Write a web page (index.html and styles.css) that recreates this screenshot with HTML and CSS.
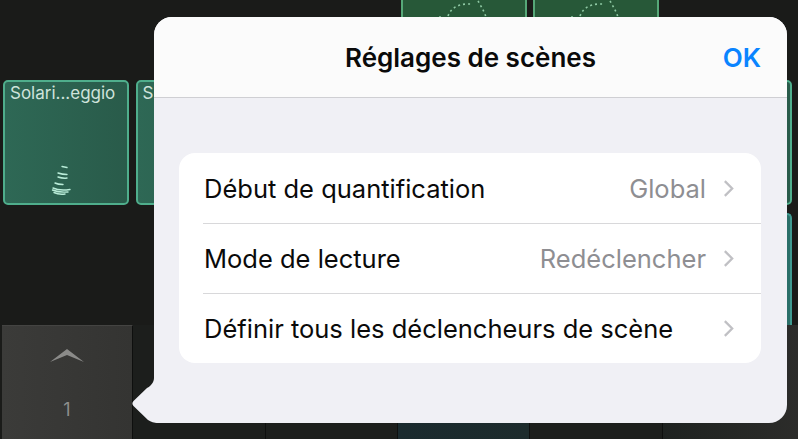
FILE: index.html
```html
<!DOCTYPE html>
<html lang="fr">
<head>
  <meta charset="UTF-8" />
  <title>Réglages de scènes</title>
  <link rel="stylesheet" href="styles.css">
</head>
<body>
  <div class="stage">
    <div class="clips">
      <div class="slot"></div>
      <div class="slot"></div>
      <div class="slot"></div>
      <div class="clip clip-dark">
        <svg class="arc" viewBox="0 0 126 72"><path d="M37 69 L40 69 M46 68 C49 60 56 56 66 56 L71 56 M76 53 C79 58 82 63 84 69"/></svg>
      </div>
      <div class="clip clip-dark">
        <svg class="arc" viewBox="0 0 126 72"><path d="M37 69 L40 69 M46 68 C49 60 56 56 66 56 L71 56 M76 53 C79 58 82 63 84 69"/></svg>
      </div>
      <div class="slot"></div>

      <div class="clip">
        <div class="clip-name">Solari...eggio</div>
        <svg class="wave" viewBox="0 0 30 36">
          <path d="M13 1.500 L18 2.500"/>
          <path d="M9 8 C12 9 15 9.500 18 9.500"/>
          <path d="M9 12 C12 13 15 13.500 18 13"/>
          <path d="M6 18 C8 19 11 19.500 14 19.500"/>
          <path d="M4 23 C8 25 14 25.500 21 24.500"/>
          <path d="M3.500 25 C8 27 13 27.500 19 27"/>
          <path d="M5 27.500 C8 29 12 29.500 16 29"/>
        </svg>
      </div>
      <div class="clip"><div class="clip-name">S</div></div>
      <div class="slot"></div>
      <div class="slot"></div>
      <div class="slot"></div>
      <div class="clip"></div>

      <div class="slot"></div>
      <div class="slot"></div>
      <div class="slot"></div>
      <div class="slot"></div>
      <div class="slot"></div>
      <div class="clip clip-teal"></div>
    </div>

    <div class="scenes">
      <div class="scene scene-on">
        <svg class="scene-up" viewBox="0 0 34 14"><path d="M0 14 L17 1 L34 14 L17 7 Z"/></svg>
        <span class="scene-num">1</span>
      </div>
      <div class="scene"></div>
      <div class="scene"></div>
      <div class="scene scene-teal"></div>
      <div class="scene"></div>
      <div class="scene scene-end"></div>
    </div>

    <div class="popover">
      <svg class="popover-tail" viewBox="0 0 30 50"><path d="M30 0 L24 0 L24 3 C24 7 21 11 17 13 L3.500 26 C2 27.500 2 29.500 3.500 31 L18 45 C21 47 24 48 28 48 L30 48 Z"/></svg>
      <div class="popover-head">
        <h1>Réglages de scènes</h1>
        <span class="ok-btn">OK</span>
      </div>
      <div class="settings">
        <div class="row">
          <span class="row-label">Début de quantification</span>
          <span class="row-value">Global</span>
          <svg class="chevron" viewBox="0 0 12 20"><path d="M2 2 L10 10 L2 18"/></svg>
        </div>
        <div class="row">
          <span class="row-label">Mode de lecture</span>
          <span class="row-value">Redéclencher</span>
          <svg class="chevron" viewBox="0 0 12 20"><path d="M2 2 L10 10 L2 18"/></svg>
        </div>
        <div class="row">
          <span class="row-label">Définir tous les déclencheurs de scène</span>
          <svg class="chevron" viewBox="0 0 12 20"><path d="M2 2 L10 10 L2 18"/></svg>
        </div>
      </div>
    </div>
  </div>
</body>
</html>
```

FILE: styles.css
```css
* {
  margin: 0;
  padding: 0;
  box-sizing: border-box;
}

body {
  background: #1a1a18;
  font-family: 'Inter', 'Liberation Sans', sans-serif;
}

.stage {
  position: relative;
  width: 798px;
  height: 439px;
  overflow: hidden;
  background: #1a1b19;
}

/* clip grid behind the popover */
.clips {
  display: grid;
  grid-template-columns: repeat(6, 126px);
  grid-template-rows: 125px 125px 112px;
  column-gap: 6.6px;
  row-gap: 8px;
  margin-top: -53px;
  padding-left: 3px;
}

.clip {
  position: relative;
  background: linear-gradient(to right, #2e6855, #295b4a);
  border: 2px solid #4fae8c;
  border-radius: 5px;
  color: #cfe3db;
}

.clip-dark {
  background: #275838;
  border-color: #56a878;
}

.clip-teal {
  background: #2a6f68;
  border-color: #3f9a90;
  border-bottom: none;
  border-radius: 5px 5px 0 0;
}

.clip-name {
  padding: 1px 5px;
  font-size: 17px;
  line-height: 20px;
  white-space: nowrap;
}

.arc {
  position: absolute;
  left: -1px;
  top: -1px;
  width: 126px;
  height: 72px;
}

.arc path {
  fill: none;
  stroke: #8fc9a4;
  stroke-width: 1.6;
  stroke-dasharray: 2 3;
}

.wave {
  position: absolute;
  left: 44px;
  top: 83px;
  width: 30px;
  height: 36px;
}

.wave path {
  fill: none;
  stroke: #b9ecd8;
  stroke-width: 1.4;
  stroke-linecap: round;
}

/* scene strip along the bottom */
.scenes {
  display: grid;
  grid-template-columns: 133px 133px 132px 132px 133px 135px;
  height: 114px;
}

.scene {
  border-right: 1px solid #0e0f0e;
  background: #1c1e1c;
}

.scene-on {
  display: flex;
  flex-direction: column;
  align-items: center;
  margin-left: 2px;
  background: linear-gradient(to right, #3b3b39, #343432);
  border-top: 1px solid #444442;
}

.scene-teal {
  background: linear-gradient(to right, #1a2a2e, #1d2b2c);
}

.scene-end {
  border-right: none;
  background: linear-gradient(to right, #1e2220, #2c2c2a);
}

.scene-up {
  width: 34px;
  height: 14px;
  margin-top: 22px;
  fill: #8b8b89;
}

.scene-num {
  margin-top: 37px;
  font-size: 18px;
  line-height: 22px;
  color: #8e8e8c;
}

/* settings popover */
.popover {
  position: absolute;
  left: 154px;
  top: 17px;
  width: 633px;
  height: 406px;
  background: #f0f0f5;
  border-radius: 18px 18px 18px 4px;
}

.popover-tail {
  position: absolute;
  left: -24px;
  top: 358px;
  width: 30px;
  height: 50px;
  fill: #f0f0f5;
}

.popover-head {
  position: relative;
  display: flex;
  justify-content: flex-end;
  align-items: center;
  height: 81px;
  padding: 0 26px 0 0;
  background: #fbfbfb;
  border-bottom: 1px solid #cfcfd3;
  border-radius: 18px 18px 0 0;
}

.popover-head h1 {
  position: absolute;
  left: 0;
  right: 0;
  text-align: center;
  font-size: 26px;
  font-weight: 600;
  color: #0a0a0a;
}

.ok-btn {
  font-size: 26px;
  font-weight: 600;
  color: #0a84ff;
}

.settings {
  margin: 55px 26px 0 25px;
  background: #fff;
  border-radius: 16px;
  overflow: hidden;
}

.row {
  display: flex;
  align-items: center;
  height: 70px;
  margin-left: 24px;
  padding-right: 27px;
  border-top: 1px solid #d8d8da;
  font-size: 25.500px;
  color: #0a0a0a;
}

.row:first-child {
  border-top: none;
}

.row-label {
  flex: 1;
  padding-left: 1px;
}

.row-value {
  color: #8e8e92;
}

.chevron {
  width: 11px;
  height: 19px;
  margin-left: 17px;
  fill: none;
  stroke: #c0c0c4;
  stroke-width: 2.5;
}
```
